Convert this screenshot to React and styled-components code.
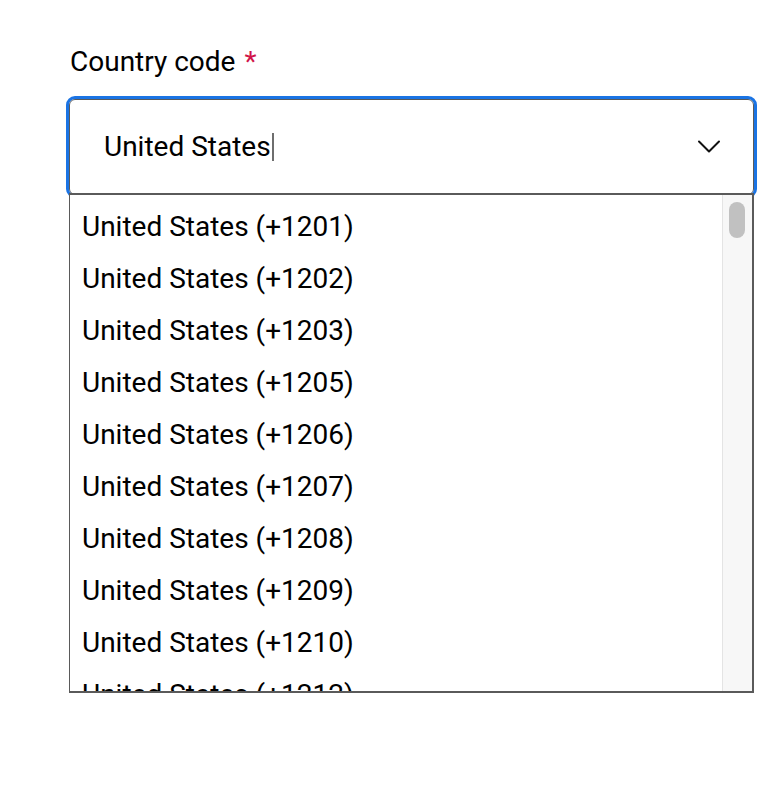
import React from "react";
import styled, { createGlobalStyle } from "styled-components";

const CODES = [
  201, 202, 203, 205, 206, 207, 208, 209, 210, 212, 213, 214, 215, 216, 217, 218, 219, 220, 223, 224,
  225, 227, 228, 229, 231, 234, 239, 240, 248, 251, 252, 253, 254, 256, 260, 262, 267, 269, 270, 272,
  274, 276, 279, 281, 283, 301, 302, 303, 304, 305, 307, 308, 309, 310, 312, 313, 314, 315, 316, 317,
  318, 319, 320, 321, 323, 325, 326, 330, 331, 332, 334, 336, 337, 339, 341, 346, 347, 351, 352, 360,
  361, 364, 380, 385, 386, 401, 402, 404, 405, 406, 407, 408, 409, 410, 412, 413, 414, 415, 417, 419,
];

const GlobalStyle = createGlobalStyle`
  html, body {
    margin: 0;
    padding: 0;
    background: #ffffff;
  }
  body {
    font-family: Roboto, "Liberation Sans", Arial, sans-serif;
    color: #000000;
  }
`;

const Page = styled.div`
  padding: 46px 0 0 69px;
  height: 802px;
  box-sizing: border-box;
`;

const Field = styled.div`
  width: 685px;
  display: flex;
  flex-direction: column;
  gap: 21px;
`;

const Label = styled.label`
  font-size: 28px;
  line-height: 32px;
  padding-left: 1px;
  color: #000000;
`;

const Required = styled.span`
  color: #d1154a;
  margin-left: 9px;
`;

const Combo = styled.div`
  position: relative;
`;

const InputBox = styled.div`
  box-sizing: border-box;
  height: 96px;
  display: flex;
  align-items: center;
  justify-content: space-between;
  padding: 0 32px 0 34px;
  border: 1px solid #5a5a5a;
  border-radius: 6px;
  outline: 3px solid #1b74e4;
  outline-offset: 0;
  background: #ffffff;
`;

const Value = styled.div`
  font-size: 28px;
  line-height: 32px;
  color: #000000;
  display: flex;
  align-items: center;
`;

const Caret = styled.span`
  display: inline-block;
  width: 2px;
  height: 28px;
  margin-left: 1px;
  background: #6e6e6e;
`;

const Listbox = styled.div`
  position: absolute;
  top: calc(100% - 2px);
  left: 0;
  right: 0;
  box-sizing: border-box;
  height: 500px;
  display: flex;
  background: #ffffff;
  border: 2px solid #5a5a5a;
  border-left-width: 1px;
`;

const Options = styled.ul`
  flex: 1;
  margin: 0;
  padding: 6px 0 0;
  list-style: none;
  overflow: hidden;
`;

const Option = styled.li`
  height: 52px;
  line-height: 52px;
  padding-left: 12px;
  font-size: 28px;
  color: #000000;
  white-space: nowrap;
`;

const ScrollTrack = styled.div`
  width: 30px;
  box-sizing: border-box;
  padding: 7px 7px 0 6px;
  background: #f7f7f7;
  border-left: 1px solid #e4e4e4;
`;

const ScrollThumb = styled.div`
  height: 36px;
  border-radius: 9px;
  background: #c1c1c1;
`;

function Chevron() {
  return (
    <svg width="24" height="14" viewBox="0 0 24 14" fill="none">
      <path d="M2 1.5 L12 11.5 L22 1.5" stroke="#111111" strokeWidth="2" strokeLinecap="round" strokeLinejoin="round" />
    </svg>
  );
}

export default function App() {
  return (
    <>
      <GlobalStyle />
      <Page>
        <Field>
          <Label>
            Country code<Required>*</Required>
          </Label>
          <Combo>
            <InputBox>
              <Value>
                United States
                <Caret />
              </Value>
              <Chevron />
            </InputBox>
            <Listbox role="listbox">
              <Options>
                {CODES.map((c) => (
                  <Option key={c}>United States (+1{c})</Option>
                ))}
              </Options>
              <ScrollTrack>
                <ScrollThumb />
              </ScrollTrack>
            </Listbox>
          </Combo>
        </Field>
      </Page>
    </>
  );
}
